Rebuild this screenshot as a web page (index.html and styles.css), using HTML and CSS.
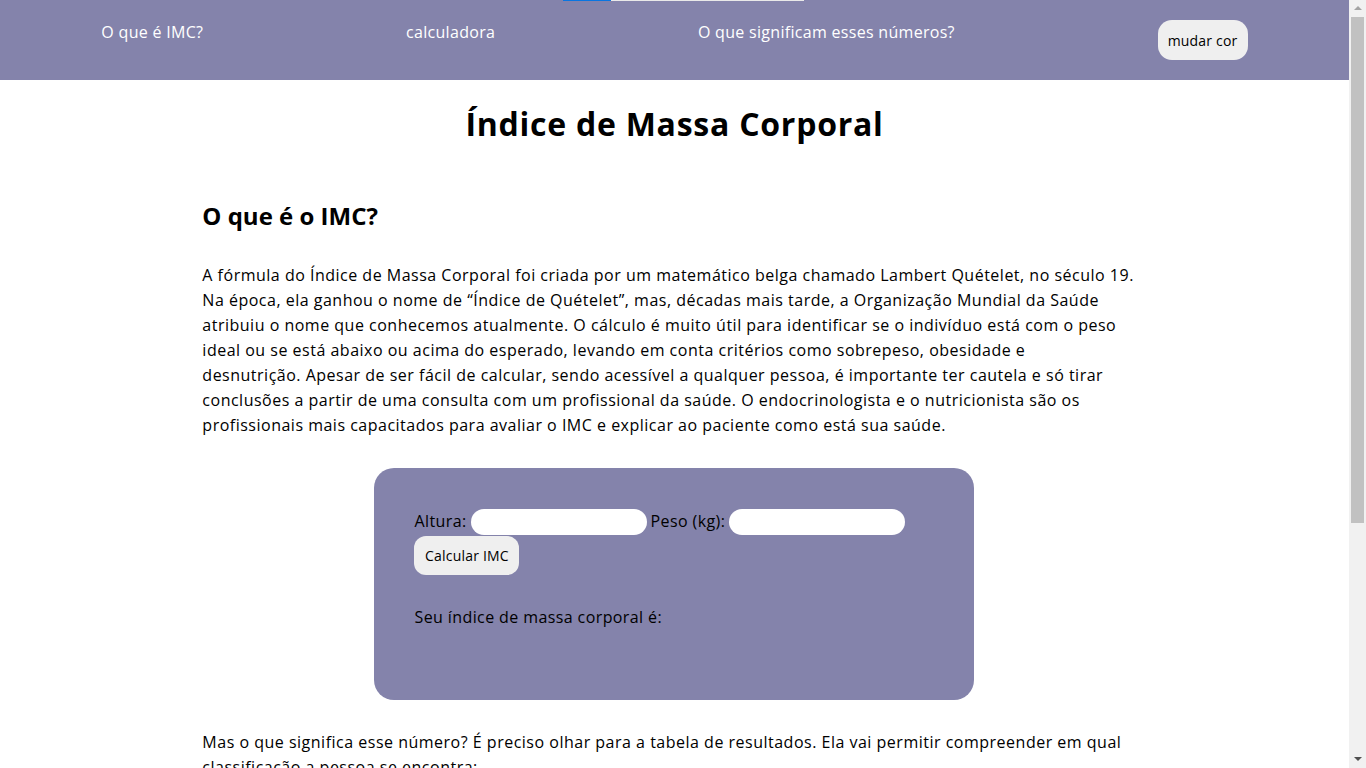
FILE: index.html
```html
<!DOCTYPE html>
<html lang="pt-BR">
<head>
<meta charset="utf-8">
<title>Índice de Massa Corporal</title>
<link rel="stylesheet" href="styles.css">
</head>
<body>
<div class="page">
  <header class="topbar">
    <div class="progress"><div class="progress-fill"></div></div>
    <nav class="nav">
      <a class="nav-link" href="#imc">O que é IMC?</a>
      <a class="nav-link" href="#calc">calculadora</a>
      <a class="nav-link" href="#tabela">O que significam esses números?</a>
      <button class="btn btn-color" type="button">mudar cor</button>
    </nav>
  </header>
  <main class="content">
    <h1 class="title">Índice de Massa Corporal</h1>
    <section id="imc">
      <h2 class="section-title">O que é o IMC?</h2>
      <p class="text">A fórmula do Índice de Massa Corporal foi criada por um matemático belga chamado Lambert Quételet, no século 19. Na época, ela ganhou o nome de “Índice de Quételet”, mas, décadas mais tarde, a Organização Mundial da Saúde atribuiu o nome que conhecemos atualmente. O cálculo é muito útil para identificar se o indivíduo está com o peso ideal ou se está abaixo ou acima do esperado, levando em conta critérios como sobrepeso, obesidade e<br>desnutrição. Apesar de ser fácil de calcular, sendo acessível a qualquer pessoa, é importante ter cautela e só tirar conclusões a partir de uma consulta com um profissional da saúde. O endocrinologista e o nutricionista são os profissionais mais capacitados para avaliar o IMC e explicar ao paciente como está sua saúde.</p>
    </section>
    <section id="calc" class="calc">
      <div class="calc-row">
        <label class="calc-label" for="altura">Altura:</label>
        <input class="calc-input" id="altura" type="text">
        <label class="calc-label" for="peso">Peso (kg):</label>
        <input class="calc-input" id="peso" type="text">
      </div>
      <button class="btn btn-calc" type="button">Calcular IMC</button>
      <p class="calc-result">Seu índice de massa corporal é:</p>
    </section>
    <section id="tabela">
      <p class="text">Mas o que significa esse número? É preciso olhar para a tabela de resultados. Ela vai permitir compreender em qual classificação a pessoa se encontra:</p>
    </section>
  </main>
</div>
<div class="scrollbar" aria-hidden="true">
  <div class="sb-arrow sb-up"></div>
  <div class="sb-thumb"></div>
  <div class="sb-arrow sb-down"></div>
</div>
</body>
</html>
```

FILE: styles.css
```css
* { box-sizing: border-box; }

html, body {
  margin: 0;
  padding: 0;
}

body {
  font-family: "Open Sans", "DejaVu Sans", sans-serif;
  font-size: 16px;
  color: #000;
  background: #fff;
  padding-right: 17px;
  height: 768px;
  overflow: hidden;
}

.page {
  width: 100%;
}

.topbar {
  position: relative;
  background: #8483ab;
  height: 80px;
}

.progress {
  position: absolute;
  top: 0;
  left: 563px;
  width: 241px;
  height: 1px;
  background: #e9e9e9;
}

.progress-fill {
  width: 48px;
  height: 100%;
  background: #0a75e0;
}

.nav {
  display: flex;
  justify-content: space-around;
  align-items: flex-start;
  padding-top: 20px;
  height: 80px;
}

.nav-link {
  color: #fff;
  text-decoration: none;
  font-size: 16px;
  line-height: 24px;
  letter-spacing: 0.3px;
}

.btn {
  font-family: inherit;
  background: #efefef;
  color: #000;
  border: none;
  cursor: pointer;
}

.btn-color {
  width: 90px;
  height: 40px;
  border-radius: 14px;
  font-size: 14px;
  padding: 0;
  letter-spacing: 0.2px;
}

.content {
  width: 70%;
  margin: 0 auto;
}

.title {
  margin: 20px 0 50px;
  text-align: center;
  font-size: 32px;
  line-height: 48px;
  font-weight: 700;
  letter-spacing: 0.75px;
}

.section-title {
  margin: 0 0 29px;
  font-size: 24px;
  line-height: 36px;
  font-weight: 700;
}

.text {
  margin: 0;
  font-size: 16px;
  line-height: 25px;
  letter-spacing: 0.5px;
}

.calc {
  width: 600px;
  height: 232px;
  margin: 30px auto;
  padding: 40px;
  background: #8483ab;
  border-radius: 20px;
}

.calc-row {
  display: flex;
  align-items: center;
  gap: 4px;
  height: 27px;
}

.calc-label {
  font-size: 16px;
  line-height: 25px;
  letter-spacing: 0.4px;
}

.calc-input {
  width: 176px;
  height: 26px;
  border: none;
  border-radius: 13px;
  background: #fff;
  font-family: inherit;
  padding: 0 10px;
}

.btn-calc {
  display: block;
  margin-top: 1px;
  width: 105px;
  height: 39px;
  border-radius: 12px;
  font-size: 14px;
  padding: 0;
  letter-spacing: 0.2px;
}

.calc-result {
  margin: 30px 0 0;
  font-size: 16px;
  line-height: 25px;
  letter-spacing: 0.4px;
}

.scrollbar {
  position: fixed;
  top: 0;
  right: 0;
  width: 17px;
  height: 768px;
  background: #f1f1f1;
  display: flex;
  flex-direction: column;
  align-items: center;
}

.sb-arrow {
  width: 0;
  height: 0;
  border-left: 4px solid transparent;
  border-right: 4px solid transparent;
}

.sb-up {
  margin-top: 6px;
  border-bottom: 4px solid #a3a3a3;
}

.sb-thumb {
  margin-top: 7px;
  width: 13px;
  height: 506px;
  background: #c1c1c1;
}

.sb-down {
  margin-top: auto;
  margin-bottom: 7px;
  border-top: 4px solid #505050;
}
```
